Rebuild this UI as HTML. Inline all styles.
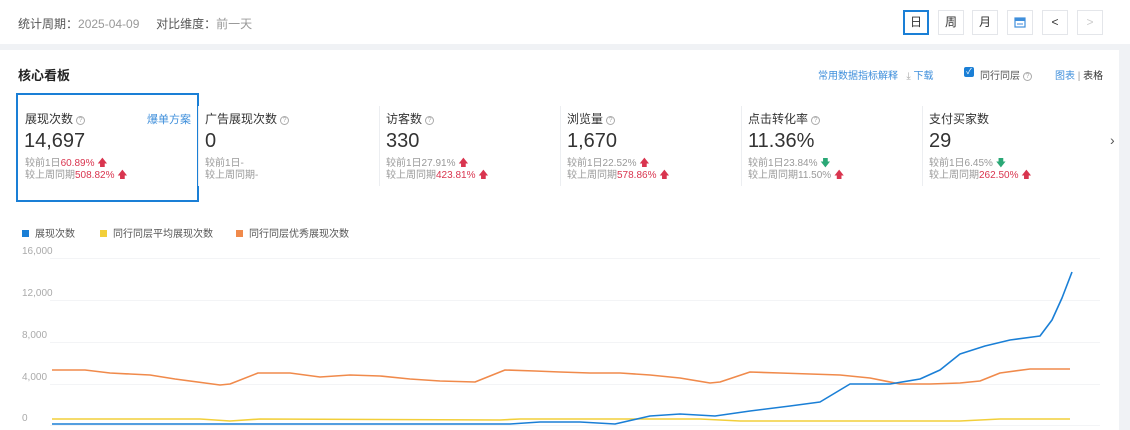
<!DOCTYPE html>
<html><head><meta charset="utf-8"><style>
*{margin:0;padding:0;box-sizing:border-box}
body{width:1130px;height:430px;overflow:hidden;background:#f0f2f5;font-family:"Liberation Sans","Noto Sans CJK SC",sans-serif;color:#333;position:relative}
.a{position:absolute;white-space:nowrap}
.hdr{left:0;top:0;width:1130px;height:44px;background:#fff}
.card{left:0;top:50px;width:1119px;height:380px;background:#fff}
.btn{top:10px;width:26px;height:25px;border:1px solid #e4e6ea;font-size:12px;text-align:center;line-height:23px;color:#333;background:#fff}
.q{display:inline-block;width:9px;height:9px;border:1px solid #aaa;border-radius:50%;font-size:7px;line-height:7px;text-align:center;color:#aaa;vertical-align:1px;margin-left:3px}
.t{font-size:12px;color:#333}
.n{font-size:20px;color:#333}
.c{font-size:10px;color:#999;line-height:12px}
.r{color:#d9354f}
.up{color:#d9354f;font-size:10px}
.dn{color:#2aa876;font-size:10px}
.sep{width:1px;height:80px;background:#eceef1;top:106px}
.lg{font-size:10px;color:#555;top:225px}
.sq{display:inline-block;width:7px;height:7px;margin-right:6px;vertical-align:0}
.yl{font-size:10px;color:#aaa;left:22px}
</style></head><body>
<div class="a hdr"></div>
<div class="a" style="left:18px;top:15px;font-size:12px;color:#555">统计周期：<span style="color:#999">2025-04-09</span>&nbsp;&nbsp;&nbsp;&nbsp;&nbsp;对比维度：<span style="color:#999">前一天</span></div>
<div class="a btn" style="left:903px;border:2px solid #1a7fd6;line-height:21px">日</div>
<div class="a btn" style="left:938px">周</div>
<div class="a btn" style="left:972px">月</div>
<div class="a btn" style="left:1007px"><svg width="12" height="11" viewBox="0 0 12 11" style="margin-top:6px"><rect x="1" y="1" width="10" height="9" fill="none" stroke="#3f8fdb" stroke-width="1.2"/><rect x="1" y="1" width="10" height="3" fill="#3f8fdb"/><rect x="3" y="6" width="6" height="2" fill="#9cc3ee"/></svg></div>
<div class="a btn" style="left:1042px">&lt;</div>
<div class="a btn" style="left:1077px;color:#ccc">&gt;</div>
<div class="a card"></div>
<div class="a" style="left:18px;top:65px;font-size:13px;font-weight:bold;color:#222">核心看板</div>
<div class="a" style="left:818px;top:67px;font-size:10px;color:#3f8fdb">常用数据指标解释&nbsp;&nbsp;&nbsp;<span style="color:#aaa">⤓</span> 下载</div>
<div class="a" style="left:964px;top:67px;width:10px;height:10px;background:#1a7fd6;border-radius:2px;color:#fff;font-size:8px;line-height:10px;text-align:center">✓</div>
<div class="a" style="left:980px;top:67px;font-size:10px;color:#555">同行同层<span class="q">?</span></div>
<div class="a" style="left:1055px;top:67px;font-size:10px;color:#3f8fdb">图表 <span style="color:#999">|</span> <span style="color:#333">表格</span></div>

<div class="a" style="left:16px;top:93px;width:183px;height:109px;border:2px solid #1a7fd6"></div>
<div class="a sep" style="left:198px"></div><div class="a sep" style="left:379px"></div><div class="a sep" style="left:560px"></div><div class="a sep" style="left:741px"></div><div class="a sep" style="left:922px"></div>

<div class="a t" style="left:25px;top:110px">展现次数<span class="q">?</span></div>
<div class="a" style="left:147px;top:111px;font-size:11px;color:#3f8fdb">爆单方案</div>
<div class="a n" style="left:24px;top:130px">14,697</div>
<div class="a c" style="left:25px;top:158px">较前1日<span class="r">60.89%</span> <span class="up">🡅</span><br>较上周同期<span class="r">508.82%</span> <span class="up">🡅</span></div>

<div class="a t" style="left:205px;top:110px">广告展现次数<span class="q">?</span></div>
<div class="a n" style="left:205px;top:130px">0</div>
<div class="a c" style="left:205px;top:158px">较前1日-<br>较上周同期-</div>

<div class="a t" style="left:386px;top:110px">访客数<span class="q">?</span></div>
<div class="a n" style="left:386px;top:130px">330</div>
<div class="a c" style="left:386px;top:158px">较前1日27.91% <span class="up">🡅</span><br>较上周同期<span class="r">423.81%</span> <span class="up">🡅</span></div>

<div class="a t" style="left:567px;top:110px">浏览量<span class="q">?</span></div>
<div class="a n" style="left:567px;top:130px">1,670</div>
<div class="a c" style="left:567px;top:158px">较前1日22.52% <span class="up">🡅</span><br>较上周同期<span class="r">578.86%</span> <span class="up">🡅</span></div>

<div class="a t" style="left:748px;top:110px">点击转化率<span class="q">?</span></div>
<div class="a n" style="left:748px;top:130px">11.36%</div>
<div class="a c" style="left:748px;top:158px">较前1日23.84% <span class="dn">🡇</span><br>较上周同期11.50% <span class="up">🡅</span></div>

<div class="a t" style="left:929px;top:110px">支付买家数</div>
<div class="a n" style="left:929px;top:130px">29</div>
<div class="a c" style="left:929px;top:158px">较前1日6.45% <span class="dn">🡇</span><br>较上周同期<span class="r">262.50%</span> <span class="up">🡅</span></div>
<div class="a" style="left:1110px;top:132px;font-size:14px;color:#555">›</div>

<div class="a lg" style="left:22px"><span class="sq" style="background:#1a7fd6"></span>展现次数</div>
<div class="a lg" style="left:100px"><span class="sq" style="background:#f2cf3a"></span>同行同层平均展现次数</div>
<div class="a lg" style="left:236px"><span class="sq" style="background:#f08a4b"></span>同行同层优秀展现次数</div>
<div class="a yl" style="top:246px">16,000</div>
<div class="a yl" style="top:288px">12,000</div>
<div class="a yl" style="top:330px">8,000</div>
<div class="a yl" style="top:372px">4,000</div>
<div class="a yl" style="top:413px">0</div>
<svg class="a" style="left:0;top:0" width="1130" height="430">
<g stroke="#f3f4f6" stroke-width="1"><line x1="50" y1="258.5" x2="1100" y2="258.5"/><line x1="50" y1="300.5" x2="1100" y2="300.5"/><line x1="50" y1="342.5" x2="1100" y2="342.5"/><line x1="50" y1="384.5" x2="1100" y2="384.5"/><line x1="50" y1="425.5" x2="1100" y2="425.5"/></g>
<g fill="none" stroke-width="1.6" stroke-linejoin="round">
<polyline stroke="#f2cf3a" points="52,419 200,419 230,421 260,419 500,420 520,419 700,419 740,421 960,421 1000,419 1070,419"/>
<polyline stroke="#f08a4b" points="52,370 85,370 110,373 130,374 150,375 175,379 205,383 220,385 230,384 258,373 290,373 320,377 350,375 380,376 410,379 440,381 475,382 505,370 535,371 560,372 590,373 620,373 650,375 680,378 710,383 720,382 750,372 780,373 810,374 840,375 870,378 900,384 930,384 960,383 980,381 1000,373 1030,369 1070,369"/>
<polyline stroke="#1a7fd6" points="52,424 510,424 540,422 580,422 615,424 650,416 680,414 715,416 750,411 790,406 820,402 850,384 890,384 920,379 940,370 960,354 985,346 1010,340 1040,336 1052,320 1062,298 1072,272"/>
</g></svg>
</body></html>
